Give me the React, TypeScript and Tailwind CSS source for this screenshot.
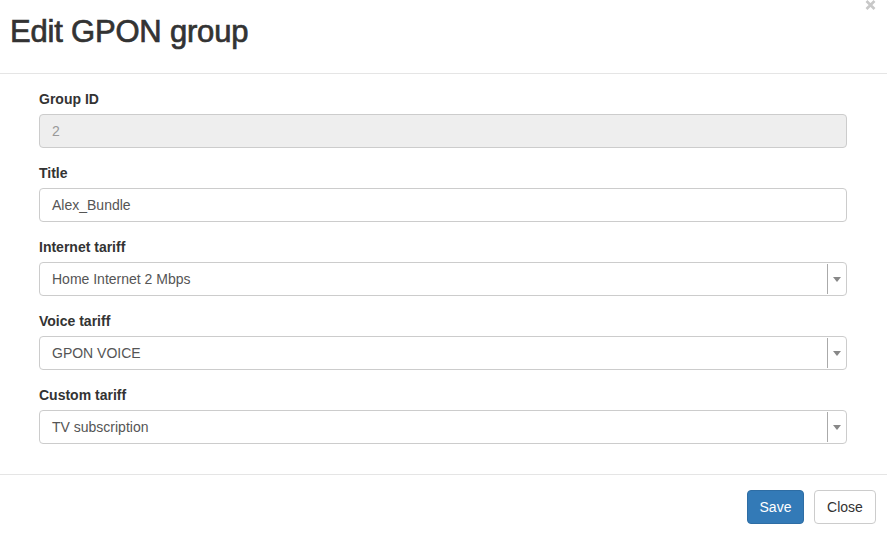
import React from 'react';

const font = { fontFamily: '"Liberation Sans", Arial, Helvetica, sans-serif' };

function Label({ children }: { children: React.ReactNode }) {
  return <label className="block text-[14px] font-bold leading-[20px] text-[#333] mb-[5px]">{children}</label>;
}

function TextInput({ value, disabled }: { value: string; disabled?: boolean }) {
  return (
    <div
      className={
        'h-[34px] rounded-[4px] border border-[#ccc] px-[12px] flex items-center text-[14px] ' +
        (disabled ? 'bg-[#eee] text-[#999]' : 'bg-white text-[#555]')
      }
    >
      {value}
    </div>
  );
}

function SelectBox({ value }: { value: string }) {
  return (
    <div className="h-[34px] rounded-[4px] border border-[#ccc] bg-white flex items-stretch text-[14px] text-[#555]">
      <div className="flex-1 flex items-center px-[12px]">{value}</div>
      <div className="w-[19px] border-l border-[#aaa] my-[1px] flex items-center justify-center">
        <svg width="8" height="5" viewBox="0 0 8 5">
          <path d="M0 0 L8 0 L4 5 Z" fill="#888" />
        </svg>
      </div>
    </div>
  );
}

function Field({ label, children }: { label: string; children: React.ReactNode }) {
  return (
    <div className="mb-[15px]">
      <Label>{label}</Label>
      {children}
    </div>
  );
}

export default function App() {
  return (
    <div className="w-[887px] h-[533px] bg-white overflow-hidden relative" style={font}>
      <button className="absolute right-[11px] top-0" title="Close">
        <svg width="11" height="10" viewBox="0 0 11 10">
          <path d="M1.5 1 L9.5 9 M9.5 1 L1.5 9" stroke="#c8c8c8" strokeWidth="2.6" />
        </svg>
      </button>

      <div className="h-[74px] border-b border-[#e5e5e5] pl-[10px] pt-[14px]">
        <h1 className="text-[31px] leading-[36px] font-normal text-[#333] tracking-[-0.2px] [-webkit-text-stroke:0.7px_#333]">
          Edit GPON group
        </h1>
      </div>

      <div className="pl-[39px] pr-[40px] pt-[15px] pb-[15px]">
        <Field label="Group ID">
          <TextInput value="2" disabled />
        </Field>
        <Field label="Title">
          <TextInput value="Alex_Bundle" />
        </Field>
        <Field label="Internet tariff">
          <SelectBox value="Home Internet 2 Mbps" />
        </Field>
        <Field label="Voice tariff">
          <SelectBox value="GPON VOICE" />
        </Field>
        <Field label="Custom tariff">
          <SelectBox value="TV subscription" />
        </Field>
      </div>

      <div className="border-t border-[#e5e5e5] pt-[15px] pr-[11px] flex justify-end gap-[10px]">
        <button className="h-[34px] w-[57px] rounded-[4px] bg-[#337ab7] border border-[#2e6da4] text-white text-[14px]">
          Save
        </button>
        <button className="h-[34px] w-[62px] rounded-[4px] bg-white border border-[#ccc] text-[#333] text-[14px]">
          Close
        </button>
      </div>
    </div>
  );
}
